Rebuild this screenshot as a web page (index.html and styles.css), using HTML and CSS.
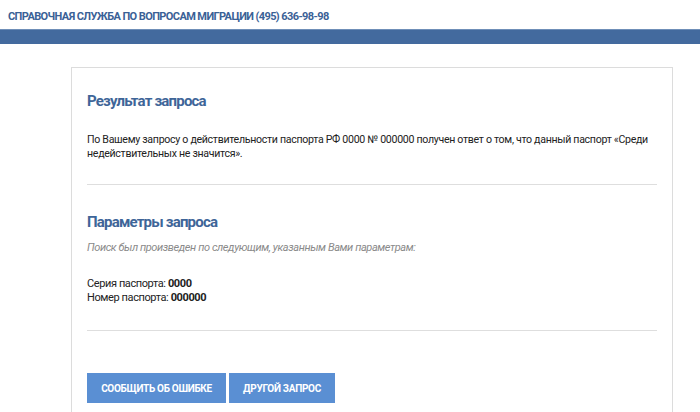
FILE: index.html
```html
<!DOCTYPE html>
<html lang="ru">
<head>
    <meta charset="UTF-8">
    <meta name="viewport" content="width=device-width, initial-scale=1.0">
    <title>Справочная служба</title>
    <link rel="stylesheet" href="styles.css">
</head>
<body>
    <div class="header">
        <div class="header-title">Справочная служба по вопросам миграции (495) 636-98-98</div>
    </div>
    <div class="stripe"></div>

    <div class="page">
        <div class="card">
            <h2 class="section-title">Результат запроса</h2>
            <p class="result-text">По Вашему запросу о действительности паспорта РФ 0000 № 000000 получен ответ о том, что данный паспорт «Среди недействительных не значится».</p>

            <hr class="divider">

            <h2 class="section-title second">Параметры запроса</h2>
            <p class="note">Поиск был произведен по следующим, указанным Вами параметрам:</p>

            <div class="params">
                <div>Серия паспорта: <b>0000</b></div>
                <div>Номер паспорта: <b>000000</b></div>
            </div>

            <hr class="divider last">

            <div class="actions">
                <a href="#" class="btn btn-wide">Сообщить об ошибке</a>
                <a href="#" class="btn">Другой запрос</a>
            </div>
        </div>
    </div>
</body>
</html>
```

FILE: styles.css
```css
body {
    font-family: Roboto, "Noto Sans", sans-serif;
    margin: 0;
    padding: 0;
    background-color: #fff;
    color: #222;
    font-size: 11px;
    letter-spacing: -0.4px;
}

.header {
    height: 29px;
    padding: 0 8px;
    display: flex;
    align-items: center;
}

.header-title {
    font-size: 11px;
    font-weight: bold;
    letter-spacing: -0.6px;
    text-transform: uppercase;
    color: #3a6196;
    padding-top: 4px;
}

.stripe {
    height: 14px;
    background-color: #436a9e;
    border-top: 1px solid #6f8fb8;
}

.page {
    padding-top: 23px;
}

.card {
    width: 570px;
    margin-left: 71px;
    padding: 23px 15px 40px;
    border: 1px solid #dcdcdc;
    border-bottom: none;
}

.section-title {
    margin: 0;
    font-size: 15px;
    line-height: 20px;
    font-weight: bold;
    letter-spacing: -0.8px;
    color: #3e6598;
}

.section-title.second {
    margin-top: 27px;
}

.result-text {
    margin: 22px 0 0;
    font-size: 10.6px;
    letter-spacing: -0.3px;
    line-height: 14px;
}

.divider {
    border: none;
    border-top: 1px solid #dedede;
    margin: 23px 0 0;
}

.divider.last {
    margin-top: 25px;
}

.note {
    margin: 9px 0 0;
    font-style: italic;
    color: #8a8a8a;
    line-height: 14px;
}

.params {
    margin-top: 22px;
    line-height: 14px;
}

.actions {
    margin-top: 42px;
    display: flex;
    gap: 3px;
}

.btn {
    display: flex;
    align-items: center;
    justify-content: center;
    height: 30px;
    width: 106px;
    background-color: #5a8fd3;
    color: #fff;
    font-size: 10px;
    font-weight: bold;
    letter-spacing: -0.3px;
    text-transform: uppercase;
    text-decoration: none;
}

.btn-wide {
    width: 139px;
}

.btn:hover {
    background-color: #4a7fc3;
}
```
